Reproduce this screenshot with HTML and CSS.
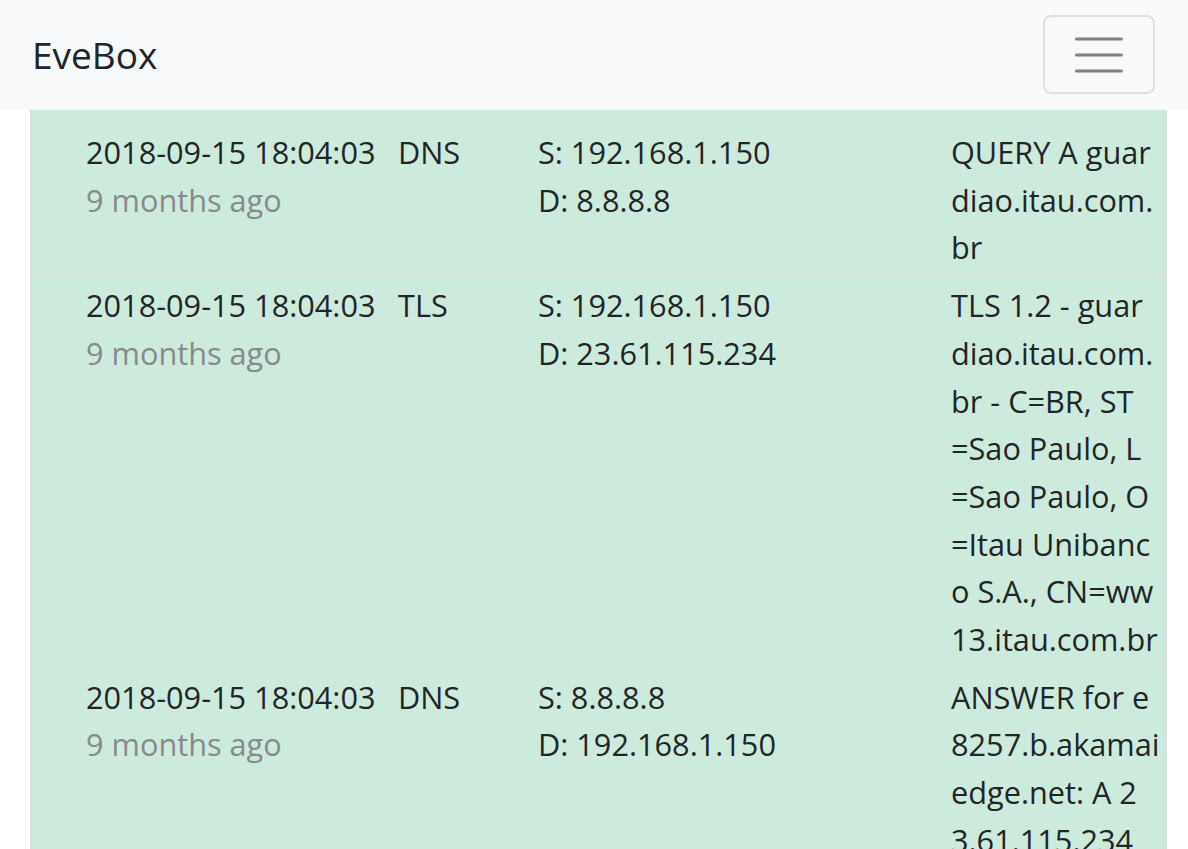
FILE: index.html
```html
<!DOCTYPE html>
<html lang="en">
<head>
<meta charset="utf-8">
<title>EveBox</title>
<link rel="stylesheet" href="styles.css">
</head>
<body>
<nav class="navbar">
  <span class="brand">EveBox</span>
  <button class="toggler" type="button" aria-label="Toggle navigation">
    <svg width="48" height="36" viewBox="0 0 48 36" aria-hidden="true">
      <path d="M1.5 2h45M1.5 18h45M1.5 34h45" stroke="#808080" stroke-width="3" stroke-linecap="round" fill="none"/>
    </svg>
  </button>
</nav>
<main class="content">
  <div class="events">
    <div class="event">
      <div class="cell"><div>2018-09-15 18:04:03</div><div class="muted">9 months ago</div></div>
      <div class="cell">DNS</div>
      <div class="cell"><div>S: 192.168.1.150</div><div>D: 8.8.8.8</div></div>
      <div class="cell desc"><span class="ln">QUERY A guar</span><span class="ln">diao.itau.com.</span><span class="ln">br</span></div>
    </div>
    <div class="event">
      <div class="cell"><div>2018-09-15 18:04:03</div><div class="muted">9 months ago</div></div>
      <div class="cell">TLS</div>
      <div class="cell"><div>S: 192.168.1.150</div><div>D: 23.61.115.234</div></div>
      <div class="cell desc"><span class="ln">TLS 1.2 - guar</span><span class="ln">diao.itau.com.</span><span class="ln">br - C=BR, ST</span><span class="ln">=Sao Paulo, L</span><span class="ln">=Sao Paulo, O</span><span class="ln">=Itau Unibanc</span><span class="ln">o S.A., CN=ww</span><span class="ln">13.itau.com.br</span></div>
    </div>
    <div class="event">
      <div class="cell"><div>2018-09-15 18:04:03</div><div class="muted">9 months ago</div></div>
      <div class="cell">DNS</div>
      <div class="cell"><div>S: 8.8.8.8</div><div>D: 192.168.1.150</div></div>
      <div class="cell desc"><span class="ln">ANSWER for e</span><span class="ln">8257.b.akamai</span><span class="ln">edge.net: A 2</span><span class="ln">3.61.115.234</span></div>
    </div>
  </div>
</main>
</body>
</html>
```
FILE: styles.css
```css
html, body {
  margin: 0;
  padding: 0;
  background: #ffffff;
}
body {
  font-family: "Segoe UI", "Open Sans", "Noto Sans", sans-serif;
  font-size: 30.7px;
  line-height: 47.7px;
  color: #212529;
}
.navbar {
  height: 110px;
  box-sizing: border-box;
  background: #f8f9fa;
  display: flex;
  align-items: center;
  justify-content: space-between;
  padding: 0 33px 0 32px;
}
.brand {
  font-size: 37px;
  line-height: 1;
  color: #212529;
  margin-top: -1px;
}
.toggler {
  width: 112px;
  height: 79px;
  box-sizing: border-box;
  border: 2px solid rgba(0, 0, 0, 0.1);
  border-radius: 8px;
  background: transparent;
  display: flex;
  align-items: center;
  justify-content: center;
  padding: 0;
  margin-top: -1px;
}
.toggler svg { display: block; }
.content {
  padding-left: 30px;
}
.events {
  width: 1137px;
  box-sizing: border-box;
  background: #cdebdc;
  border-left: 1px solid #d9dcdd;
  border-right: 1px solid #d9dcdd;
  padding-top: 9px;
  min-height: 740px;
}
.event {
  display: grid;
  grid-template-columns: 312px 140px 413px 1fr;
  padding: 9px 6px 0 55px;
  border-top: 1px solid #dee2e6;
}
.cell {
  min-width: 0;
  white-space: nowrap;
}
.muted {
  color: #868a8c;
}
.desc .ln {
  display: block;
}
```
